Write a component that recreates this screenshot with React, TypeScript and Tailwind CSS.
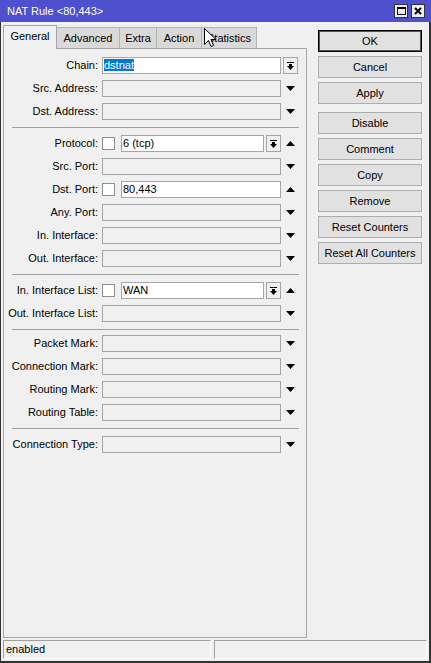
import React from 'react';

type Slot = 'menu' | 'down' | 'up' | null;

const Arrow = ({ up = false }: { up?: boolean }) => (
  <svg width="9" height="5" viewBox="0 0 9 5">
    <polygon points={up ? '0,5 9,5 4.5,0' : '0,0 9,0 4.5,5'} fill="#000" />
  </svg>
);

const MenuButton = () => (
  <div className="w-[15px] h-[17px] shrink-0 border border-[#a6a6a6] bg-[#f0f0f0] flex items-center justify-center">
    <svg width="7" height="8" viewBox="0 0 7 8">
      <rect x="0" y="0" width="7" height="1" fill="#000" />
      <rect x="2" y="2" width="3" height="2" fill="#000" />
      <polygon points="0,4 7,4 3.5,8" fill="#000" />
    </svg>
  </div>
);

const Box = ({ value, enabled = false, children }: { value?: string; enabled?: boolean; children?: React.ReactNode }) => (
  <div
    className={`flex-1 h-[17px] border border-[#a6a6a6] pl-[1px] leading-[15px] whitespace-nowrap overflow-hidden ${
      enabled ? 'bg-white' : 'bg-[#f0f0f0]'
    }`}
  >
    {children ?? value}
  </div>
);

const Check = () => <div className="w-[13px] h-[13px] shrink-0 bg-white border border-[#8f8f8f]" />;

const Row = ({ label, slot = 'down', children }: { label: string; slot?: Slot; children?: React.ReactNode }) => (
  <div className="flex items-center h-[23px]">
    <div className="w-[94px] text-right whitespace-nowrap">{label}</div>
    <div className="ml-[4px] w-[179px] flex items-center">{children ?? <Box />}</div>
    <div className="ml-[2px] w-[15px] flex items-center justify-center">
      {slot === 'menu' && <MenuButton />}
      {slot === 'down' && <Arrow />}
      {slot === 'up' && <Arrow up />}
    </div>
  </div>
);

const Divider = ({ tight = false }: { tight?: boolean }) => (
  <div className={`mt-[4px] ${tight ? 'mb-[2px]' : 'mb-[4px]'} ml-[8px] mr-[7px] h-px bg-[#a0a0a0]`} />
);

const Btn = ({ label, primary = false }: { label: string; primary?: boolean }) => (
  <div
    className={`h-[22px] flex items-center justify-center bg-[#e1e1e1] border ${
      primary ? 'border-black shadow-[inset_0_0_0_1px_#555]' : 'border-[#adadad]'
    }`}
  >
    {label}
  </div>
);

const tabs = [
  { name: 'Advanced', w: 'w-[63px]' },
  { name: 'Extra', w: 'w-[37px]' },
  { name: 'Action', w: 'w-[45px]' },
  { name: 'Statistics', w: 'w-[55px]' },
];

export default function App() {
  return (
    <div className="relative w-[431px] h-[663px] flex flex-col bg-[#f0f0f0] text-[11px] text-black font-['Liberation_Sans',Arial,sans-serif] overflow-hidden select-none">
      {/* title bar */}
      <div className="h-[22px] shrink-0 bg-[#4f50ce] flex items-center justify-between pl-[7px] pr-[6px]">
        <span className="text-white">NAT Rule &lt;80,443&gt;</span>
        <div className="flex gap-[3px]">
          <div className="w-[14px] h-[14px] bg-[#ececec] border border-[#333] flex items-center justify-center">
            <div className="w-[9px] h-[8px] border border-black border-t-2" />
          </div>
          <div className="w-[14px] h-[14px] bg-[#ececec] border border-[#333] flex items-center justify-center">
            <svg width="8" height="8" viewBox="0 0 8 8">
              <path d="M1 1 L7 7 M7 1 L1 7" stroke="#000" strokeWidth="2" />
            </svg>
          </div>
        </div>
      </div>

      <div className="flex-1 flex flex-col border-l border-r-2 border-b-2 border-[#333]">
        <div className="flex-1 flex">
          {/* tabs + form */}
          <div className="ml-[2px] w-[304px] flex flex-col">
            <div className="h-[26px] flex items-end">
              <div className="relative z-10 w-[54px] h-[24px] -mb-px bg-[#f0f0f0] border border-b-0 border-[#a6a6a6] flex items-center justify-center pb-[2px]">
                General
              </div>
              {tabs.map(t => (
                <div
                  key={t.name}
                  className={`${t.w} h-[21px] bg-[#d9d9d9] border border-l-0 border-b-0 border-[#b4b4b4] flex items-center justify-center`}
                >
                  {t.name}
                </div>
              ))}
            </div>
            <div className="flex-1 border border-[#a6a6a6] pt-[5px]">
              <Row label="Chain:" slot="menu">
                <Box enabled>
                  <span className="bg-[#0078d7] text-white">dstnat</span>
                </Box>
              </Row>
              <Row label="Src. Address:" />
              <Row label="Dst. Address:" />
              <Divider />
              <Row label="Protocol:" slot="up">
                <Check />
                <div className="ml-[6px] flex-1 flex">
                  <Box enabled value="6 (tcp)" />
                </div>
                <div className="ml-[2px]">
                  <MenuButton />
                </div>
              </Row>
              <Row label="Src. Port:" />
              <Row label="Dst. Port:" slot="up">
                <Check />
                <div className="ml-[6px] flex-1 flex">
                  <Box enabled value="80,443" />
                </div>
              </Row>
              <Row label="Any. Port:" />
              <Row label="In. Interface:" />
              <Row label="Out. Interface:" />
              <Divider />
              <Row label="In. Interface List:" slot="up">
                <Check />
                <div className="ml-[6px] flex-1 flex">
                  <Box enabled value="WAN" />
                </div>
                <div className="ml-[2px]">
                  <MenuButton />
                </div>
              </Row>
              <Row label="Out. Interface List:" />
              <Divider tight />
              <Row label="Packet Mark:" />
              <Row label="Connection Mark:" />
              <Row label="Routing Mark:" />
              <Row label="Routing Table:" />
              <Divider />
              <Row label="Connection Type:" />
            </div>
          </div>

          {/* action buttons */}
          <div className="ml-[11px] mt-[8px] w-[104px] flex flex-col gap-[4px]">
            <Btn label="OK" primary />
            <Btn label="Cancel" />
            <Btn label="Apply" />
            <div className="mt-[4px] flex flex-col gap-[4px]">
              <Btn label="Disable" />
              <Btn label="Comment" />
              <Btn label="Copy" />
              <Btn label="Remove" />
              <Btn label="Reset Counters" />
              <Btn label="Reset All Counters" />
            </div>
          </div>
        </div>

        {/* status bar */}
        <div className="h-[19px] mt-[2px] mb-[2px] ml-[2px] mr-[2px] flex gap-[3px]">
          <div className="w-[208px] border border-[#a0a0a0] border-r-white border-b-white pl-[2px] leading-[17px]">enabled</div>
          <div className="flex-1 border border-[#a0a0a0] border-r-white border-b-white" />
        </div>
      </div>

      {/* mouse pointer */}
      <svg className="absolute left-[204px] top-[28px]" width="13" height="20" viewBox="0 0 13 20">
        <path d="M0.5 0.5 L0.5 16.5 L4.5 12.5 L7 18.5 L9.5 17.5 L7 11.5 L12 11.5 Z" fill="#fff" stroke="#000" strokeWidth="1" />
      </svg>
    </div>
  );
}
